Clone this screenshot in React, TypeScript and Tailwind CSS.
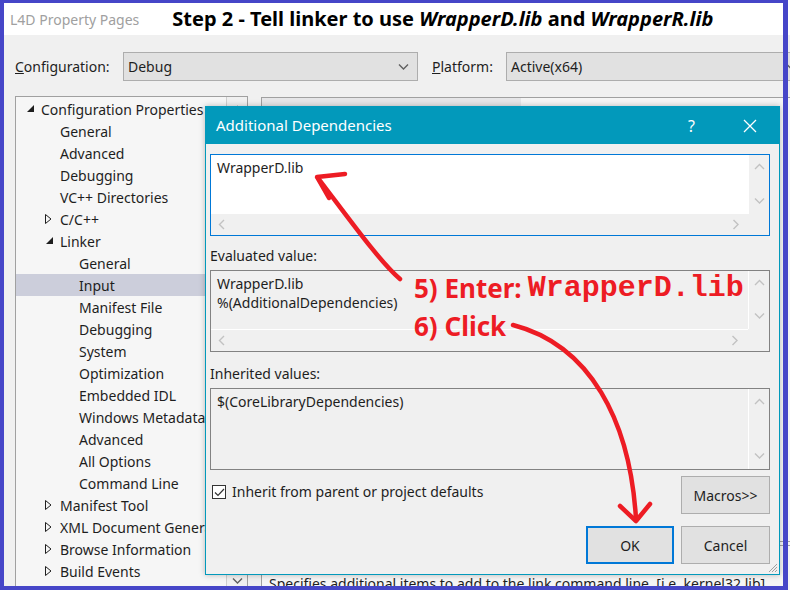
import React from "react";

type Dir = "up" | "down" | "left" | "right";

function Chev({ dir, color = "#c2c2c2", className = "" }: { dir: Dir; color?: string; className?: string }) {
  const vertical = dir === "up" || dir === "down";
  const pts =
    dir === "up" ? "1,6 5.5,1.5 10,6" : dir === "down" ? "1,1.5 5.5,6 10,1.5" : dir === "left" ? "6,1 1.5,5.5 6,10" : "1.5,1 6,5.5 1.5,10";
  return (
    <svg
      width={vertical ? 11 : 8}
      height={vertical ? 8 : 11}
      viewBox={vertical ? "0 0 11 8" : "0 0 8 11"}
      className={className}
    >
      <polyline points={pts} fill="none" stroke={color} strokeWidth="1.4" />
    </svg>
  );
}

function Combo({ text, width }: { text: string; width: string }) {
  return (
    <div className={`${width} h-[29px] shrink-0 border border-[#adadad] bg-[#e1e1e1] flex items-center pl-[4px] pr-[8px]`}>
      <span className="flex-1">{text}</span>
      <Chev dir="down" color="#606060" />
    </div>
  );
}

type Node = { label: string; level: number; arrow?: "open" | "closed"; selected?: boolean };

const tree: Node[] = [
  { label: "Configuration Properties", level: 0, arrow: "open" },
  { label: "General", level: 1 },
  { label: "Advanced", level: 1 },
  { label: "Debugging", level: 1 },
  { label: "VC++ Directories", level: 1 },
  { label: "C/C++", level: 1, arrow: "closed" },
  { label: "Linker", level: 1, arrow: "open" },
  { label: "General", level: 2 },
  { label: "Input", level: 2, selected: true },
  { label: "Manifest File", level: 2 },
  { label: "Debugging", level: 2 },
  { label: "System", level: 2 },
  { label: "Optimization", level: 2 },
  { label: "Embedded IDL", level: 2 },
  { label: "Windows Metadata", level: 2 },
  { label: "Advanced", level: 2 },
  { label: "All Options", level: 2 },
  { label: "Command Line", level: 2 },
  { label: "Manifest Tool", level: 1, arrow: "closed" },
  { label: "XML Document Generator", level: 1, arrow: "closed" },
  { label: "Browse Information", level: 1, arrow: "closed" },
  { label: "Build Events", level: 1, arrow: "closed" },
];

const indent = ["pl-[25px]", "pl-[44px]", "pl-[63px]"];

function TreeRow({ n }: { n: Node }) {
  return (
    <div className={`h-[22px] flex items-center whitespace-nowrap ${n.selected ? "bg-[#cccedb]" : ""} ${indent[n.level]}`}>
      <span className="relative">
        {n.arrow === "open" && (
          <svg width="7" height="7" viewBox="0 0 7 7" className="absolute left-[-14px] top-[6px]">
            <polygon points="7,0 7,7 0,7" fill="#1e1e1e" />
          </svg>
        )}
        {n.arrow === "closed" && (
          <svg width="7" height="10" viewBox="0 0 7 10" className="absolute left-[-15px] top-[5px]">
            <polygon points="0.5,0.5 6,5 0.5,9.5" fill="none" stroke="#1e1e1e" strokeWidth="1" />
          </svg>
        )}
        {n.label}
      </span>
    </div>
  );
}

function Button({ children, primary = false, width }: { children: React.ReactNode; primary?: boolean; width: string }) {
  return (
    <div
      className={`${width} h-[38px] flex items-center justify-center bg-[#e1e1e1] ${
        primary ? "border-2 border-[#0078d7]" : "border border-[#adadad]"
      }`}
    >
      {children}
    </div>
  );
}

function Dialog() {
  return (
    <div className="absolute left-[205px] top-[106px] w-[575px] h-[469px] border border-[#0299bb] bg-[#f0f0f0] flex flex-col shadow-[0_0_6px_rgba(0,0,0,0.25)]">
      {/* title bar */}
      <div className="h-[37px] shrink-0 bg-[#0299bb] flex items-center text-white text-[15px]">
        <span className="ml-[10px] flex-1">Additional Dependencies</span>
        <span className="mr-[48px] text-[16px]">?</span>
        <svg width="14" height="14" viewBox="0 0 14 14" className="mr-[22px]">
          <path d="M1 1 L13 13 M13 1 L1 13" stroke="white" strokeWidth="1.3" />
        </svg>
      </div>

      <div className="pl-[4px] pr-[9px] flex flex-col">
        {/* textbox 1 */}
        <div className="mt-[10px] h-[82px] border border-[#0078d7] bg-white grid grid-cols-[1fr_20px] grid-rows-[1fr_21px]">
          <div className="pl-[6px] pt-[3px] leading-[20px]">WrapperD.lib</div>
          <div className="bg-[#f0f0f0] flex flex-col items-center justify-between pt-[8px] pb-[9px]">
            <Chev dir="up" />
            <Chev dir="down" />
          </div>
          <div className="bg-[#f0f0f0] flex items-center justify-between pl-[7px] pr-[9px]">
            <Chev dir="left" />
            <Chev dir="right" />
          </div>
          <div className="bg-[#f0f0f0]" />
        </div>

        <div className="pt-[10px] pb-[4px] leading-[20px]">Evaluated value:</div>

        {/* textbox 2 */}
        <div className="h-[82px] border border-[#828282] bg-[#f0f0f0] grid grid-cols-[1fr_21px] grid-rows-[1fr_22px]">
          <div className="pl-[6px] pt-[3px] leading-[19px]">
            <div>WrapperD.lib</div>
            <div>%(AdditionalDependencies)</div>
          </div>
          <div className="border-l border-white flex flex-col items-center justify-between pt-[8px] pb-[9px]">
            <Chev dir="up" />
            <Chev dir="down" />
          </div>
          <div className="border-t border-white flex items-center justify-between pl-[7px] pr-[9px]">
            <Chev dir="left" />
            <Chev dir="right" />
          </div>
          <div />
        </div>

        <div className="pt-[12px] pb-[4px] leading-[20px]">Inherited values:</div>

        {/* textbox 3 */}
        <div className="h-[82px] border border-[#828282] bg-[#f0f0f0] grid grid-cols-[1fr_21px]">
          <div className="pl-[6px] pt-[3px] leading-[20px]">$(CoreLibraryDependencies)</div>
          <div className="border-l border-white flex flex-col items-center justify-between pt-[9px] pb-[9px]">
            <Chev dir="up" />
            <Chev dir="down" />
          </div>
        </div>

        {/* checkbox + macros */}
        <div className="mt-[6px] flex items-start">
          <div className="mt-[6px] ml-[2px] flex items-center">
            <div className="w-[14px] h-[14px] border border-[#333333] bg-white flex items-center justify-center">
              <svg width="11" height="9" viewBox="0 0 11 9">
                <polyline points="1,4.5 4,7.5 10,1" fill="none" stroke="#333333" strokeWidth="1.2" />
              </svg>
            </div>
            <span className="ml-[6px] leading-[20px]">Inherit from parent or project defaults</span>
          </div>
          <div className="ml-auto">
            <Button width="w-[89px]">Macros&gt;&gt;</Button>
          </div>
        </div>

        {/* ok / cancel */}
        <div className="mt-[12px] flex justify-end gap-[7px]">
          <Button primary width="w-[88px]">OK</Button>
          <Button width="w-[89px]">Cancel</Button>
        </div>
      </div>

      {/* resize grip */}
      <svg width="10" height="10" viewBox="0 0 10 10" className="absolute right-[1px] bottom-[1px]">
        <path d="M9 1 L1 9 M9 4 L4 9 M9 7 L7 9" stroke="#a0a0a0" strokeWidth="1" />
      </svg>
    </div>
  );
}

export default function App() {
  return (
    <div className="relative w-[790px] h-[590px] overflow-hidden bg-[#f0f0f0] font-['Noto_Sans',sans-serif] text-[14px] text-[#1e1e1e]">
      {/* window title bar */}
      <div className="h-[35px] bg-white flex items-center pt-[3px] whitespace-nowrap">
        <span className="ml-[10px] shrink-0 text-[#a0a0a0] text-[14px]">L4D Property Pages</span>
        <span className="ml-[33px] shrink-0 font-bold text-[20px] text-black">
          Step 2 - Tell linker to use <i>WrapperD.lib</i> and <i>WrapperR.lib</i>
        </span>
      </div>

      {/* configuration row */}
      <div className="mt-[17px] flex items-center whitespace-nowrap">
        <span className="ml-[15px] w-[108px] shrink-0">
          <u>C</u>onfiguration:
        </span>
        <Combo text="Debug" width="w-[295px]" />
        <span className="ml-[14px] w-[74px] shrink-0">
          <u>P</u>latform:
        </span>
        <Combo text="Active(x64)" width="w-[300px]" />
      </div>

      {/* main area */}
      <div className="mt-[15px] flex items-start">
        {/* tree */}
        <div className="ml-[15px] w-[233px] h-[500px] shrink-0 border border-[#a0a0a0] bg-[#f6f6f6] flex">
          <div className="flex-1 overflow-hidden pt-[1px]">
            {tree.map((n, i) => (
              <TreeRow key={i} n={n} />
            ))}
          </div>
          <div className="w-[21px] border-l border-[#cfcfcf] bg-[#f0f0f0] flex flex-col items-center justify-between pt-[8px] pb-[10px]">
            <Chev dir="up" color="#606060" />
            <Chev dir="down" color="#606060" />
          </div>
        </div>

        {/* property grid panel */}
        <div className="ml-[13px] mt-[1px] w-[540px] h-[500px] shrink-0 border border-[#a0a0a0] bg-[#f5f5f5] flex flex-col">
          <div className="h-[443px] flex">
            <div className="w-[259px] bg-[#e6e6e8]" />
            <div className="flex-1 bg-[#f5f5f5]" />
          </div>
          <div className="h-[4px] border-t border-[#a0a0a0]" />
          <div className="flex-1 border-t border-[#a0a0a0] pl-[7px] pt-[3px] leading-[20px] whitespace-nowrap">
            <div className="font-bold">Additional Dependencies</div>
            <div className="mt-[5px]">Specifies additional items to add to the link command line. [i.e. kernel32.lib]</div>
          </div>
        </div>
      </div>

      <Dialog />

      {/* red annotation arrows */}
      <svg width="790" height="590" viewBox="0 0 790 590" className="absolute left-0 top-0 pointer-events-none">
        <g fill="none" stroke="#ed1c24" strokeWidth="4.5" strokeLinecap="round" strokeLinejoin="round">
          <path d="M400 279 C380 262 350 220 318 178" />
          <path d="M345 174 L317 177 L329 198" />
          <path d="M513 325 C590 345 630 420 636 519" />
          <path d="M620 506 L636 521 L650 504" />
        </g>
      </svg>

      {/* red annotation text */}
      <div className="absolute left-[414px] top-[270px] h-[36px] flex items-center text-[#ed1c24] font-bold text-[26px] whitespace-nowrap">
        <span>5) Enter:</span>
        <span className="ml-[6px] font-['Liberation_Mono',monospace] text-[30px]">WrapperD.lib</span>
      </div>
      <div className="absolute left-[414px] top-[308px] h-[36px] flex items-center text-[#ed1c24] font-bold text-[26px] whitespace-nowrap">
        6) Click
      </div>

      {/* blue frame */}
      <div className="absolute left-0 top-0 w-[788px] h-[590px] border-l-4 border-t-[3px] border-r-[5px] border-b-4 border-[#4646c8] pointer-events-none" />
    </div>
  );
}
